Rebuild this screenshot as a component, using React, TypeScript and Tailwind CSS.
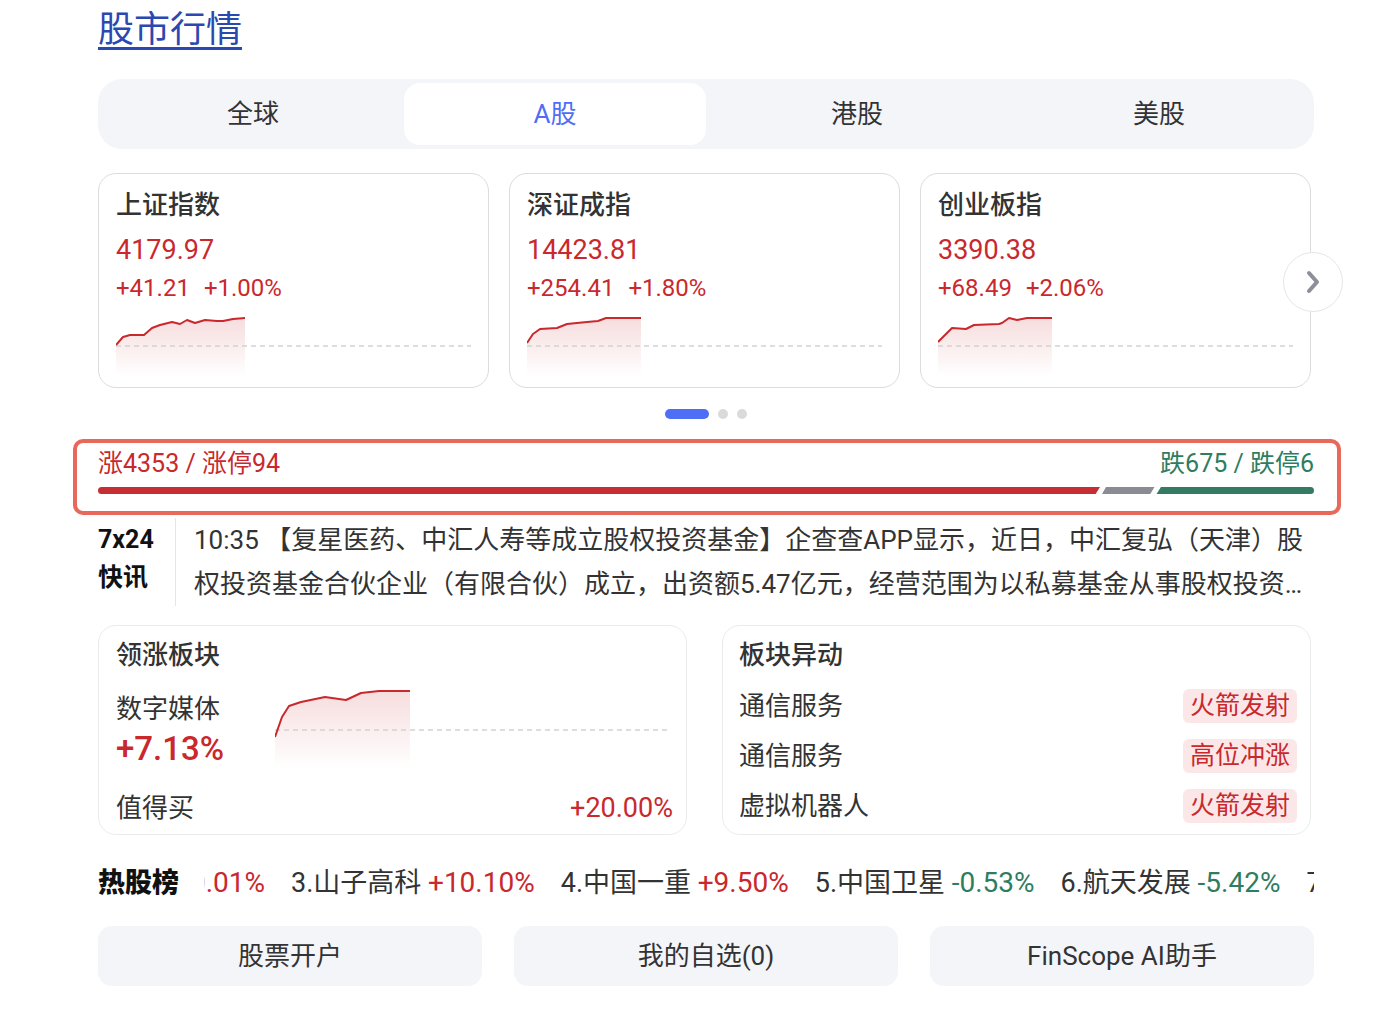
import { useId } from 'react';

type Pt = [number, number];

const indices: { name: string; price: string; change: string; pct: string; points: Pt[] }[] = [
  {
    name: '上证指数',
    price: '4179.97',
    change: '+41.21',
    pct: '+1.00%',
    points: [[0, 29], [7, 21], [14, 19], [28, 19], [36, 12], [44, 9], [56, 6], [64, 8], [71, 4], [79, 7], [89, 4], [101, 5], [107, 5], [117, 3], [129, 2]],
  },
  {
    name: '深证成指',
    price: '14423.81',
    change: '+254.41',
    pct: '+1.80%',
    points: [[0, 27], [6, 18], [13, 13], [30, 12], [40, 8], [60, 6], [71, 5], [79, 2], [114, 2]],
  },
  {
    name: '创业板指',
    price: '3390.38',
    change: '+68.49',
    pct: '+2.06%',
    points: [[0, 26], [14, 12], [28, 13], [36, 9], [61, 8], [64, 7], [71, 2], [79, 4], [89, 2], [114, 2]],
  },
];

const moves = [
  { name: '通信服务', tag: '火箭发射' },
  { name: '通信服务', tag: '高位冲涨' },
  { name: '虚拟机器人', tag: '火箭发射' },
];

const hot = [
  { name: '3.山子高科', pct: '+10.10%', up: true },
  { name: '4.中国一重', pct: '+9.50%', up: true },
  { name: '5.中国卫星', pct: '-0.53%', up: false },
  { name: '6.航天发展', pct: '-5.42%', up: false },
  { name: '7.中国船舶', pct: '-1.26%', up: false },
];

function Spark({ points, width, height, base }: { points: Pt[]; width: number; height: number; base: number }) {
  const id = useId().replace(/:/g, '');
  const line = points.map((p) => p.join(',')).join(' ');
  const last = points[points.length - 1][0];
  const area = `0,${height} ${line} ${last},${height}`;
  return (
    <svg width={width} height={height} className="block">
      <defs>
        <linearGradient id={id} x1="0" y1="0" x2="0" y2="1">
          <stop offset="0%" stopColor="#c9282d" stopOpacity="0.16" />
          <stop offset="100%" stopColor="#c9282d" stopOpacity="0" />
        </linearGradient>
      </defs>
      <polygon points={area} fill={`url(#${id})`} />
      <line x1="0" y1={base} x2={width} y2={base} stroke="#d2d2d2" strokeWidth="1.5" strokeDasharray="5 4" />
      <polyline points={line} fill="none" stroke="#c9282d" strokeWidth="2" strokeLinejoin="round" />
    </svg>
  );
}

export default function App() {
  return (
    <div className="min-h-[1024px] bg-white pl-[98px] text-[#333] font-['Roboto','Noto_Sans_CJK_SC',sans-serif]">
      <div className="w-[1216px]">
        {/* Title */}
        <h1 className="leading-[60px] text-[36px] text-[#2b48b0] underline decoration-[3px] underline-offset-[5px]">
          股市行情
        </h1>

        {/* Market tabs */}
        <div className="mt-[19px] grid h-[70px] grid-cols-4 rounded-[24px] bg-[#f4f5f9] p-[4px] text-[26px]">
          {['全球', 'A股', '港股', '美股'].map((t) => (
            <div
              key={t}
              className={
                t === 'A股'
                  ? 'flex items-center justify-center rounded-[16px] bg-white text-[#4d6ef5]'
                  : 'flex items-center justify-center'
              }
            >
              {t}
            </div>
          ))}
        </div>

        {/* Index cards */}
        <div className="relative mt-[24px] flex gap-[20px]">
          {indices.map((c) => (
            <div key={c.name} className="h-[215px] w-[391px] rounded-[18px] border border-[#dcdcdc] px-[17px] pt-[12px]">
              <div className="leading-[38px] text-[26px] font-medium">{c.name}</div>
              <div className="mt-[6px] leading-[40px] text-[27px] text-[#c9282d]">{c.price}</div>
              <div className="flex gap-[14px] leading-[36px] text-[24px] text-[#c9282d]">
                <span>{c.change}</span>
                <span>{c.pct}</span>
              </div>
              <div className="mt-[10px]">
                <Spark points={c.points} width={355} height={60} base={30} />
              </div>
            </div>
          ))}
          <button className="absolute right-[-29px] top-[79px] flex h-[60px] w-[60px] items-center justify-center rounded-full border border-[#e6e6e6] bg-white">
            <svg width="16" height="26" viewBox="0 0 16 26">
              <path d="M4 4 L12 13 L4 22" fill="none" stroke="#8a8f9a" strokeWidth="4" strokeLinecap="round" strokeLinejoin="round" />
            </svg>
          </button>
        </div>

        {/* Pager */}
        <div className="mt-[21px] flex justify-center gap-[9px]">
          <span className="h-[10px] w-[44px] rounded-full bg-[#4d6ef5]" />
          <span className="h-[10px] w-[10px] rounded-full bg-[#dadada]" />
          <span className="h-[10px] w-[10px] rounded-full bg-[#dadada]" />
        </div>

        {/* Up / down breadth */}
        <div className="-ml-[25px] -mr-[27px] mt-[20px] h-[76px] rounded-[10px] border-4 border-[#e8695a] pl-[21px] pr-[23px] pt-[6px]">
          <div className="flex justify-between leading-[30px] text-[25px]">
            <span className="text-[#c9282d]">涨4353 / 涨停94</span>
            <span className="text-[#2f7d61]">跌675 / 跌停6</span>
          </div>
          <svg width="1216" height="7" className="mt-[8px] block">
            <path d="M3.5 0 H1002 L997.6 7 H3.5 A3.5 3.5 0 0 1 3.5 0 Z" fill="#c62e33" />
            <path d="M1008 0 H1056.5 L1052.3 7 H1004 Z" fill="#8a8c94" />
            <path d="M1062.9 0 H1212.5 A3.5 3.5 0 0 1 1212.5 7 H1058.6 Z" fill="#357b64" />
          </svg>
        </div>

        {/* 7x24 news */}
        <div className="mt-[3px] flex">
          <div className="w-[78px] shrink-0 border-r border-[#e6e6e6] pt-[3px] text-[25px] font-bold leading-[38px] text-[#111]">
            <div>7x24</div>
            <div>快讯</div>
          </div>
          <p className="line-clamp-2 pl-[18px] text-[26px] leading-[44px]">
            10:35 【复星医药、中汇人寿等成立股权投资基金】企查查APP显示，近日，中汇复弘（天津）股权投资基金合伙企业（有限合伙）成立，出资额5.47亿元，经营范围为以私募基金从事股权投资、投资管理、资产管理等活动。
          </p>
        </div>

        {/* Sector cards */}
        <div className="mt-[19px] grid w-[1213px] grid-cols-2 gap-[35px]">
          <div className="h-[210px] rounded-[18px] border border-[#ebebeb] pl-[17px] pr-[13px] pt-[10px]">
            <div className="leading-[38px] text-[26px] font-medium">领涨板块</div>
            <div className="mt-[15px] flex h-[80px]">
              <div className="w-[159px] shrink-0">
                <div className="leading-[40px] text-[26px]">数字媒体</div>
                <div className="leading-[40px] text-[33px] font-medium text-[#c9282d]">+7.13%</div>
              </div>
              <div className="mt-px">
                <Spark
                  points={[[0, 47], [7, 27], [14, 16], [26, 12], [50, 7], [71, 10], [86, 3], [104, 1], [135, 1]]}
                  width={396}
                  height={78}
                  base={40}
                />
              </div>
            </div>
            <div className="mt-[19px] flex items-center justify-between leading-[40px]">
              <span className="text-[26px]">值得买</span>
              <span className="text-[27px] text-[#c9282d]">+20.00%</span>
            </div>
          </div>

          <div className="h-[210px] rounded-[18px] border border-[#ebebeb] pl-[16px] pr-[13px] pt-[10px]">
            <div className="leading-[38px] text-[26px] font-medium">板块异动</div>
            <div className="mt-[7px]">
              {moves.map((m, i) => (
                <div key={i} className="flex h-[50px] items-center justify-between">
                  <span className="text-[26px]">{m.name}</span>
                  <span className="rounded-[6px] bg-[#fbe7e8] px-[7px] text-[25px] leading-[34px] text-[#c9282d]">{m.tag}</span>
                </div>
              ))}
            </div>
          </div>
        </div>

        {/* Hot stocks ticker */}
        <div className="mt-[26px] flex h-[44px] items-center">
          <span className="shrink-0 whitespace-nowrap text-[27px] font-black text-[#111]">热股榜</span>
          <div className="ml-[25px] flex flex-1 items-center gap-[26px] overflow-hidden whitespace-nowrap text-[27px]">
            <span className="flex w-[61px] shrink-0 justify-end overflow-hidden">
              <span className="shrink-0 text-[28px] text-[#c9282d]">+10.01%</span>
            </span>
            {hot.map((h) => (
              <span key={h.name} className="shrink-0">
                {h.name} <span className={h.up ? 'text-[28px] text-[#c9282d]' : 'text-[28px] text-[#2f7d61]'}>{h.pct}</span>
              </span>
            ))}
          </div>
        </div>

        {/* Quick actions */}
        <div className="mt-[21px] grid grid-cols-3 gap-[32px]">
          {['股票开户', '我的自选(0)', 'FinScope AI助手'].map((b) => (
            <button key={b} className="h-[60px] rounded-[14px] bg-[#f4f5f9] text-[26px] text-[#333]">
              {b}
            </button>
          ))}
        </div>
      </div>
    </div>
  );
}
